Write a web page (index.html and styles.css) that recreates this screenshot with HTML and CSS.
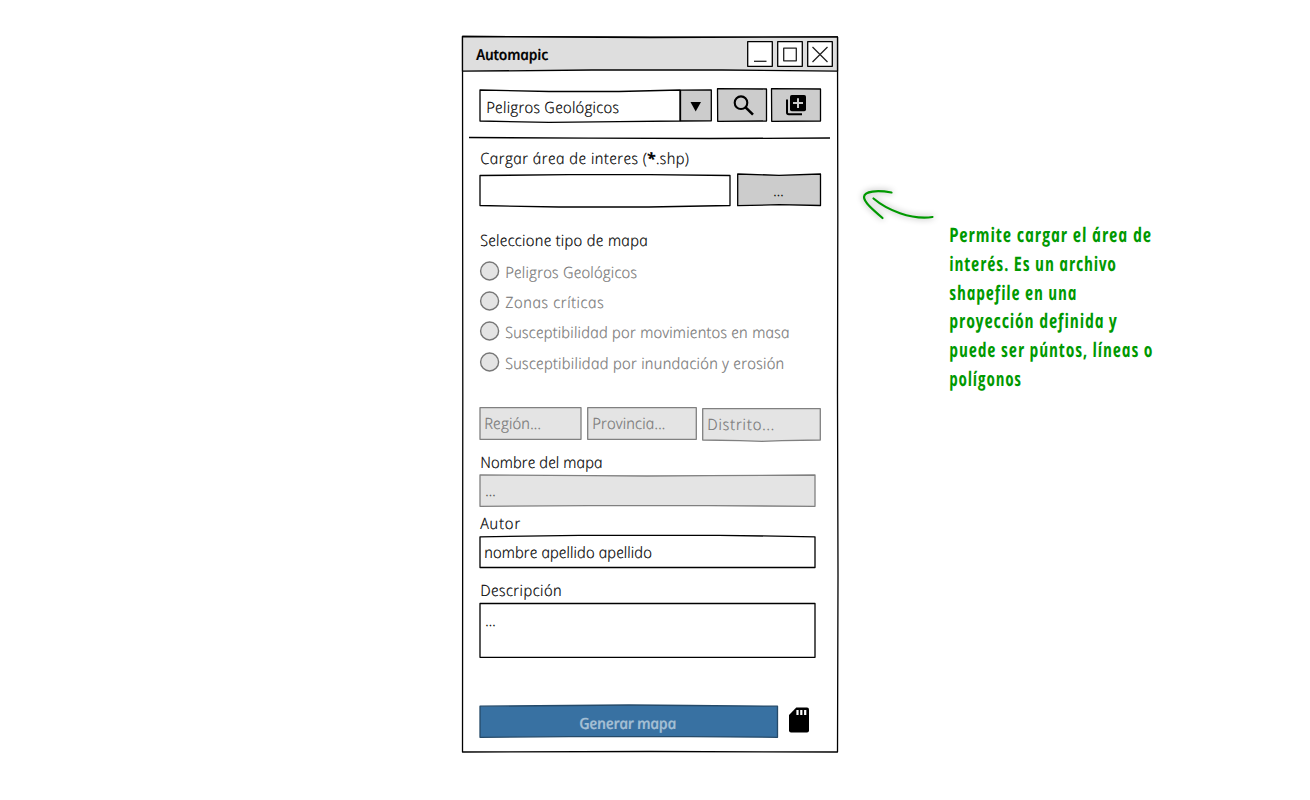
FILE: index.html
```html
<!DOCTYPE html>
<html lang="es">
<head>
<meta charset="utf-8">
<title>Automapic</title>
<link rel="stylesheet" href="styles.css">
</head>
<body>
<main class="board">
  <section class="window">
    <svg class="outline" viewBox="0 0 376 716"><path class="plain" d="M.5 .5 188 1.2 375.500 1 375.800 180 375.500 358 376 540 375.500 716 188 715.500 .5 716 .8 358Z"/></svg>
    <header class="titlebar">
      <svg class="outline" viewBox="0 0 376 35"><path class="title-fill" d="M.5 .5 188 1.500 375.500 1V35.200L260 34 130 34 .5 35.200Z"/></svg>
      <h1 class="ink title">Automapic</h1>
      <div class="controls">
        <svg viewBox="0 0 26 26"><path class="plain" d="M.7.7H25.300V25.300H.7Z"/><path class="thin" d="M7 20.300H19.500"/></svg>
        <svg viewBox="0 0 26 26"><path class="plain" d="M.7.7H25.300V25.300H.7Z"/><path class="thin" d="M6.700 7.200H19.300V19.800H6.700Z"/></svg>
        <svg viewBox="0 0 26 26"><path class="plain" d="M.7.7H25.300V25.300H.7Z"/><path class="thin" d="M5.500 6 20.500 21M20.500 6 5.500 21"/></svg>
      </div>
    </header>
    <div class="toolbar">
      <div class="box select">
        <svg class="outline" viewBox="0 0 233 33"><path class="plain" d="M1 1 70 2.500 140 2.500 201 1V32L140 32.700 70 33.300 1 32Z"/><path class="gray" d="M201.500 1.200 232.300 1V31.800L201.500 32Z"/><path class="solid" d="M211.500 13H222L216.700 22.500Z"/></svg>
        <span class="ink t-select">Peligros Geológicos</span>
      </div>
      <div class="box tool">
        <svg class="outline" viewBox="0 0 50 34"><path class="gray" d="M.5 .7 49.500 1 49.500 33 .7 33.300Z"/><circle class="lens" cx="24" cy="14.700" r="6.300"/><path class="handle" d="M28.600 19.300 36 26.700"/></svg>
      </div>
      <div class="box tool">
        <svg class="outline" viewBox="0 0 50 34"><path class="gray" d="M.5 .7 49.500 1 49.500 33 .7 33.300Z"/><path class="stack" d="M16 11.500V24.500Q16 26.300 17.800 26.300H31"/><rect x="19" y="7" width="16" height="16.300" rx="1.800"/><path class="plus" d="M27 10.200V20M22 15.100H32"/></svg>
      </div>
    </div>
    <svg class="rule" viewBox="0 0 361 2"><path class="plain" d="M0 .5 120 1.200 240 1.500 361 1"/></svg>

    <form class="form">
      <span class="ink t-area">Cargar área de interes (<b>*</b>.shp)</span>
      <div class="file">
        <div class="box path">
          <svg class="outline" viewBox="0 0 252 33"><path class="plain" d="M1 1.500 90 .7 170 .7 251 1.500V31.500L170 33 80 33 1 31.500Z"/></svg>
        </div>
        <div class="box browse">
          <svg class="outline" viewBox="0 0 84 33"><path class="gray" d="M.7 0 42 1.300 83.500 0V31.500L42 30.700.7 31.700Z"/></svg>
          <span class="ink">...</span>
        </div>
      </div>
      <span class="ink t-type">Seleccione tipo de mapa</span>
      <div class="radios">
        <div class="radio"><svg viewBox="0 0 20 20"><circle cx="10.600" cy="10" r="9"/></svg><span class="ink t-r1">Peligros Geológicos</span></div>
        <div class="radio"><svg viewBox="0 0 20 20"><circle cx="10.600" cy="10" r="9"/></svg><span class="ink t-r2">Zonas críticas</span></div>
        <div class="radio"><svg viewBox="0 0 20 20"><circle cx="10.600" cy="10" r="9"/></svg><span class="ink t-r3">Susceptibilidad por movimientos en masa</span></div>
        <div class="radio"><svg viewBox="0 0 20 20"><circle cx="10.600" cy="10" r="9"/></svg><span class="ink t-r4">Susceptibilidad por inundación y erosión</span></div>
      </div>
      <div class="places">
        <div class="box place region"><svg class="outline" viewBox="0 0 103 33"><path class="off" d="M1 .7H102V32.300H1Z"/></svg><span class="ink t-region">Región...</span></div>
        <div class="box place province"><svg class="outline" viewBox="0 0 110 33"><path class="off" d="M.7.700H109.300V32.300H.7Z"/></svg><span class="ink t-province">Provincia...</span></div>
        <div class="box place district"><svg class="outline" viewBox="0 0 119 33"><path class="off" d="M.7.700H118.300V32L80 32.700 60 33.300 38 32.700.7 32Z"/></svg><span class="ink t-district">Distrito...</span></div>
      </div>
      <span class="ink t-name">Nombre del mapa</span>
      <div class="box field name">
        <svg class="outline" viewBox="0 0 337 33"><path class="off" d="M1 1 110 1.600 168 2 230 1.600 336 1V32.300L230 31.700H110L1 32.300Z"/></svg><span class="ink">...</span>
      </div>
      <span class="ink t-author">Autor</span>
      <div class="box field author">
        <svg class="outline" viewBox="0 0 337 33"><path class="plain" d="M1 1.800 100 .3 240 .3 336 1.800V32.500H1Z"/></svg><span class="ink t-person">nombre apellido apellido</span>
      </div>
      <span class="ink t-desc">Descripción</span>
      <div class="box field area">
        <svg class="outline" viewBox="0 0 337 56"><path class="plain" d="M1 1.500H336V55.300H1Z"/></svg><span class="ink">...</span>
      </div>
      <div class="actions">
        <div class="box generate">
          <svg class="outline" viewBox="0 0 299 33"><path class="blue" d="M1 1.200 90 .5 150 0 210 .5 298.500 1.200V32.300L210 31.700H90L1 32.300Z"/></svg>
          <span class="ink t-generate">Generar mapa</span>
        </div>
        <svg class="card" viewBox="0 0 20 26"><path d="M7.300 .5H18Q20 .5 20 2.500V23.500Q20 25.500 18 25.500H2Q0 25.500 0 23.500V8Z"/><path class="pins" d="M8.500 3V8M12.300 3V8M16.200 3V8"/></svg>
      </div>
    </form>
  </section>

  <aside class="note">
    <svg class="arrow" viewBox="0 0 72 32"><path d="M28.500 4.500C14 2 1.500 3 1 9C1 14 9 21 19.500 30M10.500 10.500C24 22 48 32 69.500 29"/></svg>
    <p class="hand">
      <span class="g1">Permite cargar el área de</span>
      <span class="g2">interés. Es un archivo</span>
      <span class="g3">shapefile en una</span>
      <span class="g4">proyección definida y</span>
      <span class="g5">puede ser púntos, líneas o</span>
      <span class="g6">polígonos</span>
    </p>
  </aside>
</main>
</body>
</html>
```
FILE: styles.css
```css
* { box-sizing: border-box; }
body { margin: 0; background: #fff; font-family: "Open Sans", "Noto Sans", sans-serif; }
.board { display: flex; width: 1310px; height: 800px; padding: 36px 0 0 462px; overflow: hidden; }
svg { display: block; overflow: visible; flex: none; }

/* Sketched outlines sit behind the content of their box */
.window, .titlebar, .box { position: relative; isolation: isolate; }
.outline { position: absolute; z-index: -1; left: 0; top: 0; width: 100%; height: 100%; }
.outline path, .controls path, .rule path { stroke: #000; stroke-width: 1.3; stroke-linejoin: round; }
.outline .plain, .controls .plain { fill: #fff; }
.rule .plain { fill: none; }
.outline .title-fill { fill: #dedede; }
.outline .gray { fill: #ccc; }
.outline .off { fill: #e4e4e4; stroke: #808080; }
.outline .blue { fill: #3871a2; stroke: #254a69; }
.outline .solid { stroke: none; }
.outline .lens, .outline .handle, .outline .stack { fill: none; stroke: #000; stroke-width: 2.100; }
.outline .handle { stroke-width: 2.600; }
.outline .stack { stroke-width: 2; }
.outline .plus { stroke: #ccc; stroke-width: 2; }
.controls .thin { fill: none; stroke-width: 1.3; stroke: #222; }

/* Upright cursive letter shapes */
.ink {
  position: relative; display: block; width: max-content; height: 20px; line-height: 20px; white-space: nowrap;
  font-size: 15.5px; font-style: italic; font-weight: 300; color: #000;
  -webkit-text-stroke: .2px currentColor;
  transform: skewX(11deg); transform-origin: 0 16px;
}

.window { width: 376px; height: 716px; flex: none; }
.titlebar { display: flex; justify-content: space-between; height: 35px; padding: 5px 5px 0 15px; }
.title { margin: 3px 0 0; font-size: 15px; font-weight: 600; letter-spacing: -.25px; }
.controls { display: flex; gap: 4px; }
.controls svg { width: 26px; height: 26px; }

.toolbar { display: flex; gap: 4px; padding: 17px 0 0 17px; height: 66px; }
.select { width: 233px; height: 33px; margin: 1px 1px 0 0; padding: 8px 0 0 8px; }
.t-select { letter-spacing: .17px; }
.tool { width: 50px; height: 34px; }
.rule { width: 361px; height: 2px; margin-left: 7px; }

.form { display: flex; flex-direction: column; align-items: flex-start; padding: 9px 0 0 17px; }
.form > .ink { margin-left: 2px; }
.form > .t-area { letter-spacing: .35px; }
.t-area b { font-weight: 700; }
.file { display: flex; gap: 6px; margin-top: 6px; }
.path { width: 252px; height: 33px; }
.browse { display: flex; justify-content: center; width: 84px; height: 33px; padding-top: 6px; }
.t-type { margin-top: 23px; letter-spacing: .2px; }
.radios { display: grid; grid-template-rows: 30px 30px 31px 20px; margin-top: 11px; }
.radio { display: flex; gap: 7px; height: 20px; }
.radio svg { width: 20px; height: 20px; }
.radio circle { fill: #e4e4e4; stroke: #777; stroke-width: 1.4; }
.radio .ink { top: 1px; color: #777; }
.t-r1 { letter-spacing: .12px; }
.t-r2 { letter-spacing: .5px; }
.t-r3 { letter-spacing: .13px; }
.t-r4 { letter-spacing: .18px; }
.places { display: flex; gap: 5px; margin-top: 35px; }
.place { height: 33px; padding: 6px 0 0 6px; }
.place .ink { color: #777; }
.region { width: 103px; }
.province { width: 110px; }
.district { width: 119px; margin-top: 1px; }
.t-region, .t-province { letter-spacing: .1px; }
.t-district { letter-spacing: .8px; }
.t-name { margin-top: 11px; }
.field { width: 337px; height: 33px; padding: 6px 0 0 7px; }
.name { margin-top: 2px; }
.name .ink { color: #555; }
.t-author { margin-top: 6px; letter-spacing: .8px; }
.author { margin-top: 2px; padding: 7px 0 0 6px; }
.t-desc { margin-top: 12px; letter-spacing: .35px; }
.area { height: 56px; margin-top: 2px; padding-top: 8px; }
.actions { display: flex; gap: 11px; margin-top: 47px; }
.generate { display: flex; justify-content: center; width: 299px; height: 33px; padding-top: 8px; }
.t-generate { color: #a4bfd4; font-weight: 600; letter-spacing: -.5px; }
.card { width: 20px; height: 26px; margin-top: 2px; }
.card .pins { stroke: #fff; stroke-width: 2.200; }

/* Green annotation beside the window */
.note { margin-left: 25px; padding-top: 152px; }
.arrow { width: 72px; height: 32px; fill: none; stroke: #090; stroke-width: 2.200; stroke-linecap: round; filter: drop-shadow(0 0 3px #0006); }
.hand { display: grid; grid-auto-rows: 28.800px; margin: 0 0 0 87px; color: #090; font-size: 20px; font-style: italic; font-weight: 700; line-height: 29px; letter-spacing: 1px; }
.hand span { width: max-content; white-space: nowrap; transform-origin: 0 22px; transform: scaleX(var(--fit)) skewX(11deg); }
.g1 { --fit: .764; }
.g2 { --fit: .748; }
.g3 { --fit: .742; }
.g4 { --fit: .757; }
.g5 { --fit: .747; }
.g6 { --fit: .725; }
```
